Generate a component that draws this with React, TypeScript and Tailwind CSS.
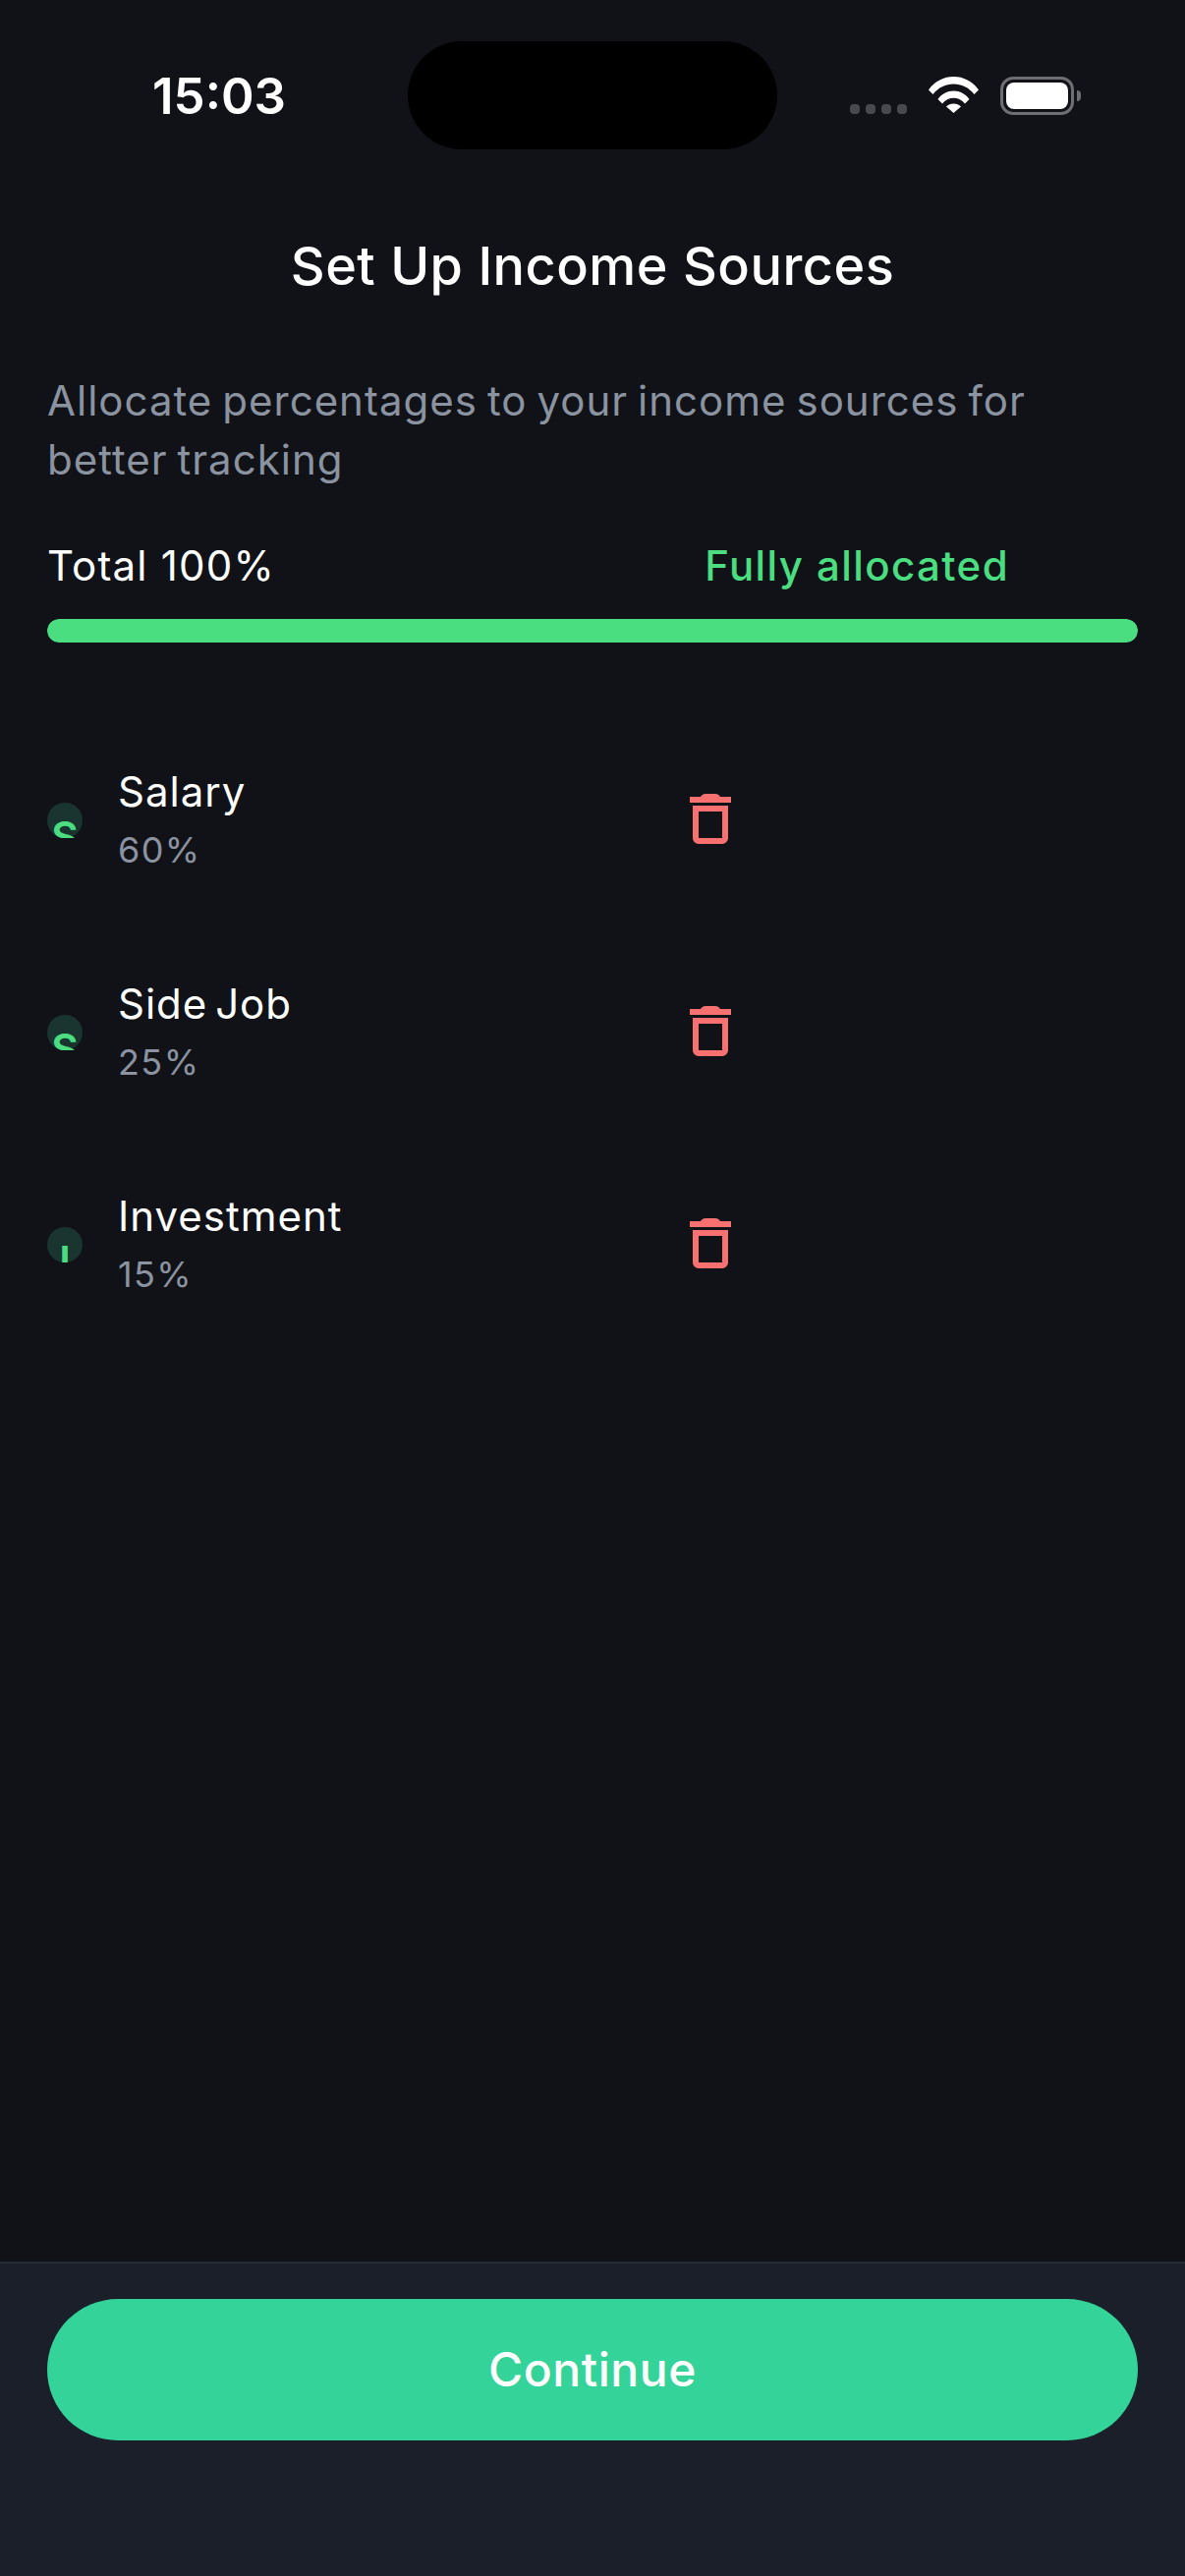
import React from 'react';

interface IncomeSource {
  name: string;
  percent: number;
}

const sources: IncomeSource[] = [
  { name: 'Salary', percent: 60 },
  { name: 'Side Job', percent: 25 },
  { name: 'Investment', percent: 15 },
];

const WifiIcon = () => (
  <svg width="51" height="37" viewBox="0 0 51 37" className="block">
    <path d="M0 13.5C6.5 4.5 15.5 0 25.5 0S44.500 4.500 51 13.500L46.500 18C41 11 33.500 7.500 25.500 7.500S10 11 4.500 18Z" fill="#fff" />
    <path d="M9.500 23C13.500 17.500 19 14.500 25.500 14.500S37.500 17.500 41.500 23L37 27.500C34 23.800 30 21.800 25.500 21.800S17 23.800 14 27.500Z" fill="#fff" />
    <path d="M18 30.500C20 28.500 22.500 27.500 25.500 27.500S31 28.500 33 30.500L25.500 37Z" fill="#fff" />
  </svg>
);

const TrashIcon = () => (
  <svg width="42" height="54" viewBox="0 0 42 54" className="block">
    <path d="M11 3C12 1 14 0 16 0H26C28 0 30 1 31 3Z M0 3H42V9H0Z" fill="#f87171" />
    <path d="M3 12V45C3 48 6 51 9 51H33C36 51 39 48 39 45V12Z M9 18H33V45H9Z" fill="#f87171" fillRule="evenodd" />
  </svg>
);

const StatusBar = () => (
  <div className="flex h-[239px] items-start pl-[155px] pr-[106px] pt-[42px]">
    <span className="mt-[25px] w-[260px] text-[51px] leading-[62px] font-semibold text-white">15:03</span>
    <div className="h-[110px] w-[376px] rounded-[55px] bg-black" />
    <div className="mt-[36px] ml-auto flex items-start">
      <div className="mt-[28px] mr-[22px] flex gap-[6px]">
        <span className="h-[10px] w-[10px] rounded-[4px] bg-[#48494d]" />
        <span className="h-[10px] w-[10px] rounded-[4px] bg-[#48494d]" />
        <span className="h-[10px] w-[10px] rounded-[4px] bg-[#48494d]" />
        <span className="h-[10px] w-[10px] rounded-[4px] bg-[#48494d]" />
      </div>
      <WifiIcon />
      <div className="ml-[22px] flex items-center">
        <div className="h-[39px] w-[75px] rounded-[13px] border-[3px] border-[#6e6e72] p-[3px]">
          <div className="h-full w-full rounded-[8px] bg-white" />
        </div>
        <span className="ml-[3px] h-[11px] w-[4px] rounded-r-full bg-[#6e6e72]" />
      </div>
    </div>
  </div>
);

const SourceRow: React.FC<{ source: IncomeSource }> = ({ source }) => (
  <div className="flex h-[216px] w-[696px] items-center justify-between">
    <div className="flex items-center gap-[36px]">
      {/* initial overflows its avatar and gets cut at the box edge */}
      <div className="h-[36px] w-[36px] rounded-full bg-[#1a3430]">
        <div className="flex h-full justify-center overflow-hidden pt-[14px] text-[42px] leading-[42px] font-semibold text-[#4ade80]">
          {source.name[0]}
        </div>
      </div>
      <div>
        <p className="text-[42px] leading-[60px] tracking-[1px] text-white [word-spacing:-5px]">{source.name}</p>
        <p className="text-[36px] leading-[58px] tracking-[1.4px] text-[#8b92a0]">{source.percent}%</p>
      </div>
    </div>
    <TrashIcon />
  </div>
);

export default function App() {
  return (
    <div className="flex h-[2622px] w-[1206px] flex-col bg-[#101217] font-['Inter',sans-serif]">
      <StatusBar />
      <div className="flex-1 px-[48px]">
        <h1 className="text-center text-[54px] leading-[64px] font-medium tracking-[0.5px] text-white">
          Set Up Income Sources
        </h1>
        <p className="mt-[75px] text-[42px] leading-[60px] tracking-[1px] text-[#8b92a0] [word-spacing:-2.800px]">
          Allocate percentages to your income sources for better tracking
        </p>
        <div className="mt-[48px] flex w-[979px] items-center justify-between">
          <span className="text-[42px] leading-[60px] tracking-[1.2px] text-white">Total 100%</span>
          <span className="text-[42px] leading-[60px] font-medium tracking-[1.4px] text-[#4ade80]">Fully allocated</span>
        </div>
        <div className="mt-[24px] h-[24px] overflow-hidden rounded-[12px] bg-[#1a1f29]">
          <div className="h-full rounded-[12px] bg-[#4ade80]" style={{ width: '100%' }} />
        </div>
        <div className="mt-[73px]">
          {sources.map((source) => (
            <SourceRow key={source.name} source={source} />
          ))}
        </div>
      </div>
      <div className="h-[320px] border-t-[2px] border-[#252a35] bg-[#1a1f29] px-[48px] pt-[36px]">
        <button className="flex h-[144px] w-full items-center justify-center rounded-[72px] bg-[#34d399] text-[48px] font-medium tracking-[0.6px] text-white">
          Continue
        </button>
      </div>
    </div>
  );
}
